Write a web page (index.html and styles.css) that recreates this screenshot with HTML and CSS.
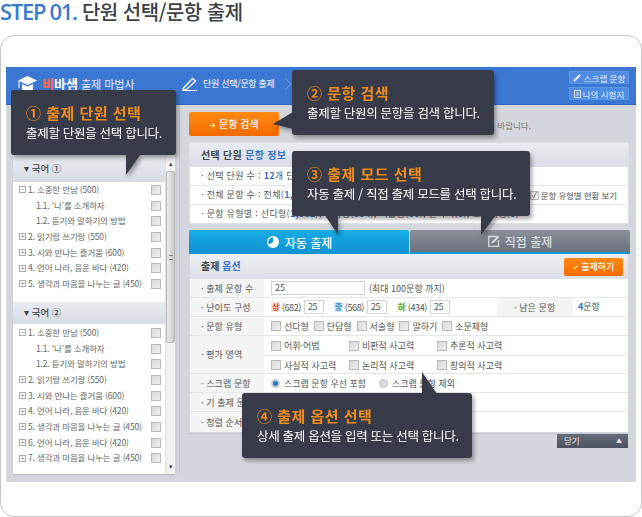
FILE: index.html
```html
<!DOCTYPE html>
<html lang="ko">
<head>
  <meta charset="UTF-8" />
  <title>STEP 01. 단원 선택/문항 출제</title>
  <link rel="stylesheet" href="styles.css">
</head>
<body>
  <h1 class="step-title"><span class="step-no">STEP 01.</span> 단원 선택/문항 출제</h1>

  <div class="card">
    <div class="app">
      <header class="app-head">
        <div class="logo">
          <svg class="cap" width="19" height="18" viewBox="0 0 19 18"><path d="M9.5 1 19 5.5 9.5 10 0 5.5z" fill="#fff"/><path d="M4 9v6c2 2 9 2 11 0V9l-5.500 2.600z" fill="#fff"/><path d="M1 6v7" stroke="#fff" fill="none"/></svg>
          <span class="logo-name"><b class="red">비</b>바샘</span>
          <span class="logo-sub">출제 마법사</span>
        </div>
        <div class="crumb">
          <svg width="16" height="14" viewBox="0 0 16 14"><path d="M1.500 11 10.500 1.500l3 2.500L4.500 12.500 1 13z" fill="none" stroke="#fff" stroke-width="1.300"/><path d="M1 13.500h14" stroke="#fff"/></svg>
          <span>단원 선택/문항 출제</span>
          <svg class="chev" width="8" height="14" viewBox="0 0 8 14"><path d="m1 1 6 6-6 6" fill="none" stroke="#6f9be0"/></svg>
        </div>
        <div class="head-btns">
          <a class="head-btn"><svg width="9" height="9" viewBox="0 0 9 9"><path d="M1 8 7 2" stroke="#dfe9fa" stroke-width="2.400" fill="none"/></svg>스크랩 문항</a>
          <a class="head-btn"><svg width="7" height="8" viewBox="0 0 7 8"><rect x=".5" y=".5" width="6" height="7" fill="none" stroke="#dfe9fa"/><path d="M2 3h3M2 5h3" stroke="#dfe9fa"/></svg>나의 시험지</a>
        </div>
      </header>

      <div class="app-body">
        <aside class="side">
          <div class="tree">
            <div class="group-head">▾ 국어 ①</div>
            <ul class="units">
              <li><span class="toggle">−</span>1. 소중한 만남 (500)<i class="cb"></i></li>
              <li class="sub">1.1. ‘나’를 소개하자<i class="cb"></i></li>
              <li class="sub">1.2. 듣기와 말하기의 방법<i class="cb"></i></li>
              <li><span class="toggle">+</span>2. 읽기랑 쓰기랑 (550)<i class="cb"></i></li>
              <li><span class="toggle">+</span>3. 시와 만나는 즐거움 (600)<i class="cb"></i></li>
              <li><span class="toggle">+</span>4. 언어 나라, 음운 바다 (420)<i class="cb"></i></li>
              <li><span class="toggle">+</span>5. 생각과 마음을 나누는 글 (450)<i class="cb"></i></li>
            </ul>
            <div class="group-head second">▾ 국어 ②</div>
            <ul class="units">
              <li><span class="toggle">−</span>1. 소중한 만남 (500)<i class="cb"></i></li>
              <li class="sub">1.1. ‘나’를 소개하자<i class="cb"></i></li>
              <li class="sub">1.2. 듣기와 말하기의 방법<i class="cb"></i></li>
              <li><span class="toggle">+</span>2. 읽기랑 쓰기랑 (550)<i class="cb"></i></li>
              <li><span class="toggle">+</span>3. 시와 만나는 즐거움 (600)<i class="cb"></i></li>
              <li><span class="toggle">+</span>4. 언어 나라, 음운 바다 (420)<i class="cb"></i></li>
              <li><span class="toggle">+</span>5. 생각과 마음을 나누는 글 (450)<i class="cb"></i></li>
              <li><span class="toggle">+</span>6. 언어 나라, 음운 바다 (420)<i class="cb"></i></li>
              <li><span class="toggle">+</span>7. 생각과 마음을 나누는 글 (450)<i class="cb"></i></li>
            </ul>
          </div>
          <div class="scroll">
            <span class="scroll-arrow">▴</span>
            <span class="scroll-thumb"><i></i></span>
            <span class="scroll-rest"></span>
            <span class="scroll-arrow">▾</span>
          </div>
        </aside>

        <main class="main">
          <div class="search-row">
            <a class="search-btn"><span class="arrow">➔</span> 문항 검색</a>
            <p class="search-note">기 바랍니다.</p>
          </div>

          <section class="info">
            <h2 class="panel-head">선택 단원 <em>문항 정보</em></h2>
            <div class="info-row">· 선택 단원 수 : <em>12</em>개 단원</div>
            <div class="info-row info-split">
              <span>· 전체 문항 수 : 전체(<em>1,680</em>)</span>
              <label class="info-check"><i class="cb checked"></i>문항 유형별 현황 보기</label>
            </div>
            <div class="info-row">· 문항 유형별 : 선다형(<em>1,002</em>), 단답형(<em>534</em>), 서술형(<em>60</em>), 말하기(<em>0</em>), 소문제형(<em>0</em>)</div>
          </section>

          <div class="tabs">
            <div class="tab tab-on">
              <svg width="14" height="14" viewBox="0 0 14 14"><circle cx="7" cy="7" r="6" fill="#fff"/><path d="M7 7V2.200A4.800 4.800 0 0 0 3 9.600z" fill="#1297d6"/></svg>
              자동 출제
            </div>
            <div class="tab tab-off">
              <svg width="12" height="12" viewBox="0 0 12 12"><path d="M9 1.500H.7v9.800h9.800V5" fill="none" stroke="#d5d8dd" stroke-width="1.300"/><path d="M3.500 8.500 4 6.500 9.800.7l1.500 1.500L5.500 8z" fill="#d5d8dd"/></svg>
              직접 출제
            </div>
          </div>

          <section class="options">
            <div class="options-head">
              <h2 class="panel-head plain">출제 <em>옵션</em></h2>
              <a class="make-btn"><span class="tick">✔</span> 출제하기</a>
            </div>

            <div class="opt-row">
              <div class="opt-label">· 출제 문항 수</div>
              <div class="opt-value"><span class="field wide">25</span><span class="gap-l">(최대 100문항 까지)</span></div>
            </div>

            <div class="opt-row">
              <div class="opt-label">· 난이도 구성</div>
              <div class="opt-value level">
                <span class="lv"><i class="lv-icon hard">상</i>(682)<span class="field">25</span></span>
                <span class="lv"><i class="lv-icon mid">중</i>(568)<span class="field">25</span></span>
                <span class="lv"><i class="lv-icon easy">하</i>(434)<span class="field">25</span></span>
              </div>
              <div class="opt-label remain">· 남은 문항</div>
              <div class="remain-val"><em>4</em>문항</div>
            </div>

            <div class="opt-row">
              <div class="opt-label">· 문항 유형</div>
              <div class="opt-value types">
                <label><i class="cb"></i>선다형</label>
                <label><i class="cb"></i>단답형</label>
                <label><i class="cb"></i>서술형</label>
                <label><i class="cb"></i>말하기</label>
                <label><i class="cb"></i>소문제형</label>
              </div>
            </div>

            <div class="opt-row tall">
              <div class="opt-label">· 평가 영역</div>
              <div class="areas">
                <div class="area-row">
                  <label><i class="cb"></i>어휘·어법</label>
                  <label><i class="cb"></i>비판적 사고력</label>
                  <label><i class="cb"></i>추론적 사고력</label>
                </div>
                <div class="area-row">
                  <label><i class="cb"></i>사실적 사고력</label>
                  <label><i class="cb"></i>논리적 사고력</label>
                  <label><i class="cb"></i>창의적 사고력</label>
                </div>
              </div>
            </div>

            <div class="opt-row">
              <div class="opt-label">· 스크랩 문항</div>
              <div class="opt-value scraps">
                <label><i class="radio on"></i>스크랩 문항 우선 포함</label>
                <label><i class="radio"></i>스크랩 문항 제외</label>
              </div>
            </div>

            <div class="opt-row">
              <div class="opt-label">· 기 출제 문항</div>
              <div class="opt-value"></div>
            </div>

            <div class="opt-row last">
              <div class="opt-label">· 정렬 순서</div>
              <div class="opt-value"></div>
            </div>
          </section>

          <div class="close-row">
            <a class="close-btn">닫기<span>▲</span></a>
          </div>
        </main>
      </div>
    </div>
  </div>

  <div class="callout c1">
    <strong>① 출제 단원 선택</strong>
    <p>출제할 단원을 선택 합니다.</p>
  </div>
  <div class="callout c2">
    <strong>② 문항 검색</strong>
    <p>출제할 단원의 문항을 검색 합니다.</p>
  </div>
  <div class="callout c3">
    <strong>③ 출제 모드 선택</strong>
    <p>자동 출제 / 직접 출제 모드를 선택 합니다.</p>
  </div>
  <div class="callout c4">
    <strong>④ 출제 옵션 선택</strong>
    <p>상세 출제 옵션을 입력 또는 선택 합니다.</p>
  </div>
</body>
</html>
```

FILE: styles.css
```css
* {
  box-sizing: border-box;
}
html, body {
  height: 517px;
  overflow: hidden;
}
body {
  margin: 0;
  background: #fff;
  font-family: "Noto Sans CJK KR", "Noto Sans", sans-serif;
  font-size: 10px;
  color: #555;
}
em {
  font-style: normal;
  color: #2f72c8;
  font-weight: bold;
}
ul {
  list-style: none;
  margin: 0;
  padding: 0;
}
p, h1, h2 {
  margin: 0;
}
i {
  font-style: normal;
}

.step-title {
  height: 35px;
  font-size: 20px;
  line-height: 22px;
  font-weight: 500;
  color: #3c404b;
  letter-spacing: -0.5px;
}
.step-no {
  font-family: "Open Sans", sans-serif;
  font-weight: 600;
  font-size: 22px;
  letter-spacing: -1.300px;
  color: #3a7ccb;
}

.card {
  width: 642px;
  height: 482px;
  border: 1px solid #c6c6c8;
  border-radius: 14px;
  padding: 31px 5px 0;
}
.app {
  width: 630px;
  height: 415px;
  background: #d3d6dc;
}

/* blue top bar */
.app-head {
  height: 38px;
  background: #3c78d3;
  border-bottom: 1px solid #3468b8;
  display: flex;
  color: #fff;
}
.logo {
  width: 176px;
  padding: 8px 0 0 12px;
  display: flex;
  align-items: flex-start;
  gap: 5px;
}
.logo-name {
  font-size: 13px;
  line-height: 18px;
  font-weight: bold;
  margin-right: -2px;
}
.red {
  color: #f4655a;
}
.logo-sub {
  font-size: 11px;
  line-height: 19px;
  color: #e8eef9;
}
.crumb {
  padding: 10px 0 0;
  display: flex;
  align-items: flex-start;
  gap: 5px;
  font-size: 9px;
  line-height: 14px;
  letter-spacing: -0.3px;
  width: 387px;
}
.chev {
  margin-left: 4px;
}
.head-btns {
  padding-top: 4px;
  display: flex;
  flex-direction: column;
  gap: 3px;
}
.head-btn {
  width: 60px;
  height: 13px;
  background: #4f8be2;
  border: 1px solid #5c96e6;
  display: flex;
  align-items: center;
  justify-content: center;
  gap: 2px;
  font-size: 8.500px;
  color: #e6eefb;
}

/* left tree + right panels */
.app-body {
  display: flex;
  height: 377px;
  padding-left: 7px;
}
.side {
  width: 162px;
  height: 319px;
  margin-top: 50px;
  display: flex;
  background: #fff;
  box-shadow: 0 1px 1px #b8bcc4;
}
.tree {
  width: 152px;
}
.group-head {
  height: 27px;
  padding-left: 11px;
  background: linear-gradient(#e9ebf0, #d8dbe3);
  font-size: 9.500px;
  line-height: 26px;
  font-weight: 500;
  color: #444;
}
.group-head.second {
  height: 22px;
  line-height: 21px;
  margin-top: 10px;
  margin-bottom: 1px;
}
.units li {
  height: 15.700px;
  line-height: 15.700px;
  padding-left: 6px;
  display: flex;
  align-items: center;
  font-size: 8.500px;
  letter-spacing: -0.15px;
  white-space: nowrap;
  color: #666;
  position: relative;
}
.units li.sub {
  padding-left: 23px;
}
.toggle {
  width: 7px;
  height: 7px;
  margin-right: 2px;
  border: 1px solid #a9adb5;
  font-size: 7px;
  line-height: 5px;
  text-align: center;
  color: #777;
  flex: none;
}
.cb {
  display: inline-block;
  flex: none;
  width: 10px;
  height: 10px;
  border: 1px solid #b9b9b9;
  background: linear-gradient(135deg, #d9d9d9, #efefef);
}
.units .cb {
  position: absolute;
  left: 138px;
  top: 3px;
}
.cb.checked {
  background: #f0f0f0;
  position: relative;
}
.cb.checked::after {
  content: "✓";
  position: absolute;
  left: 1px;
  top: -3px;
  font-size: 8px;
  line-height: 12px;
  color: #555;
}
.scroll {
  width: 10px;
  display: flex;
  flex-direction: column;
  background: #f1f1f1;
  border-left: 1px solid #e0e0e0;
}
.scroll-arrow {
  height: 16px;
  line-height: 16px;
  text-align: center;
  font-size: 7px;
  color: #444;
}
.scroll-thumb {
  height: 172px;
  background: linear-gradient(90deg, #ececec, #c9c9c9);
  border: 1px solid #b8b8b8;
  border-radius: 2px;
  display: flex;
  align-items: center;
  justify-content: center;
}
.scroll-thumb i {
  width: 4px;
  height: 5px;
  border-top: 1px solid #888;
  border-bottom: 1px solid #888;
}
.scroll-rest {
  flex: 1;
}

.main {
  width: 451px;
  height: 369px;
  margin-left: 4px;
  padding: 7px 0 0 9px;
  border-left: 1px solid #c6c9d0;
}
.search-row {
  height: 30px;
  display: flex;
  justify-content: space-between;
}
.search-btn {
  width: 90px;
  height: 24px;
  border-radius: 2px;
  background: linear-gradient(#ff8a12, #f26a00);
  color: #fff;
  font-size: 10px;
  line-height: 24px;
  font-weight: 500;
  text-align: center;
}
.arrow {
  color: #ffe68a;
  font-size: 8px;
}
.search-note {
  margin-right: 99px;
  line-height: 26px;
  font-size: 8.500px;
  color: #777;
  white-space: nowrap;
}

.info {
  height: 82px;
  width: 440px;
  background: #fff;
  border: 1px solid #dcdfe5;
  border-radius: 2px;
  overflow: hidden;
}
.panel-head {
  height: 24px;
  padding-left: 11px;
  background: linear-gradient(#e9ebf0, #dadde5);
  font-size: 10px;
  line-height: 24px;
  letter-spacing: 0.3px;
  font-weight: bold;
  color: #444;
}
.info-row {
  height: 19px;
  line-height: 18px;
  padding-left: 11px;
  font-size: 9px;
  letter-spacing: 0.3px;
  border-bottom: 1px solid #e6e7ea;
  white-space: nowrap;
}
.info-row:last-child {
  border-bottom: 0;
}
.info-split {
  display: flex;
  justify-content: space-between;
  padding-right: 11px;
}
.info-check {
  display: flex;
  align-items: center;
  gap: 2px;
  font-size: 8.500px;
  letter-spacing: -0.1px;
}
.info-check .cb {
  width: 9px;
  height: 9px;
}

.tabs {
  margin-top: 6px;
  height: 24px;
  display: flex;
  gap: 1px;
}
.tab {
  flex: 1;
  display: flex;
  align-items: center;
  justify-content: center;
  gap: 5px;
  border-radius: 2px 2px 0 0;
  font-size: 12px;
  font-weight: 500;
}
.tab-on {
  background: linear-gradient(#16ace4, #0e92d2);
  color: #fff;
}
.tab-off {
  background: linear-gradient(#8a8f99, #6c727d);
  border-bottom: 2px solid #1297d6;
  color: #d8dbe0;
}

.options {
  width: 440px;
  background: #fff;
  border: 1px solid #d4d7de;
  border-top: 0;
  box-shadow: 0 1px 1px #c5c9d2;
}
.options-head {
  height: 25px;
  display: flex;
  justify-content: space-between;
  background: linear-gradient(#eceef2, #dcdfe7);
}
.panel-head.plain {
  background: none;
  letter-spacing: 0;
}
.make-btn {
  width: 59px;
  height: 18px;
  margin: 4px 5px 0 0;
  border-radius: 2px;
  background: linear-gradient(#ff8a12, #f26a00);
  color: #fff;
  text-align: center;
  font-size: 9px;
  line-height: 18px;
  font-weight: 500;
}
.tick {
  color: #ffe68a;
  font-size: 7px;
}
.opt-row {
  height: 19px;
  display: flex;
  border-bottom: 1px solid #e6e7ea;
  font-size: 9px;
}
.opt-row.tall {
  height: 38px;
}
.opt-row.last {
  border-bottom: 0;
  height: 20px;
}
.opt-label {
  width: 74px;
  flex: none;
  padding-left: 11px;
  background: #f4f4f5;
  display: flex;
  align-items: center;
  letter-spacing: 0.1px;
  color: #555;
}
.opt-value {
  flex: 1;
  display: flex;
  align-items: center;
  padding-left: 7px;
  white-space: nowrap;
}
.opt-value label, .area-row label {
  display: flex;
  align-items: center;
  gap: 1px;
}
.opt-value .cb, .area-row .cb {
  margin-right: 2px;
}
.field {
  display: inline-block;
  width: 22px;
  height: 14px;
  line-height: 12px;
  padding-left: 3px;
  background: #fff;
  border: 1px solid #d5d5d5;
}
.field.wide {
  width: 94px;
}
.gap-l {
  margin-left: 4px;
}
.level {
  gap: 10px;
  flex: none;
  width: 233px;
}
.lv {
  display: flex;
  align-items: center;
  gap: 3px;
  width: 53px;
  letter-spacing: -0.4px;
}
.lv-icon {
  width: 10px;
  height: 10px;
  margin-right: -1px;
  border-radius: 1px;
  font-size: 8px;
  line-height: 10px;
  text-align: center;
  font-weight: bold;
}
.hard {
  background: #f9ddd4;
  color: #d9432b;
}
.mid {
  background: #d3e9f8;
  color: #2a86c8;
}
.easy {
  background: #dff0d3;
  color: #56a332;
}
.opt-label.remain {
  width: 76px;
  padding-left: 17px;
}
.remain-val {
  padding-left: 5px;
  line-height: 18px;
}
.types {
  display: grid;
  grid-template-columns: repeat(5, 42.800px);
}
.areas {
  flex: 1;
}
.area-row {
  height: 19px;
  display: grid;
  grid-template-columns: 78px 88px 88px;
  align-items: center;
  padding-left: 7px;
  white-space: nowrap;
}
.area-row + .area-row {
  border-top: 1px solid #e6e7ea;
}
.scraps label {
  width: 108px;
}
.radio {
  width: 9px;
  height: 9px;
  margin-right: 3px;
  border-radius: 50%;
  flex: none;
  background: #ddd;
  border: 1px solid #bbb;
}
.radio.on {
  background: #1c7fc4;
  border: 2px solid #c9c9c9;
}
.close-row {
  display: flex;
  justify-content: flex-end;
  padding: 1px 2px 0 0;
}
.close-btn {
  width: 71px;
  height: 14px;
  padding: 0 6px 0 7px;
  display: flex;
  justify-content: space-between;
  background: linear-gradient(#666c7a, #4e5361);
  color: #e8e8ea;
  font-size: 8.500px;
  line-height: 13px;
}
.close-btn span {
  font-size: 6px;
}

/* the dark help balloons sit over the screen */
.callout {
  position: absolute;
  height: 65px;
  padding: 11px 0 0 15px;
  background: #383c49;
  border-radius: 3px;
  filter: drop-shadow(2px 3px 2px rgba(0, 0, 0, 0.35));
  color: #fff;
  white-space: nowrap;
}
.callout strong {
  display: block;
  font-size: 15px;
  line-height: 23px;
  font-weight: bold;
  letter-spacing: 0.5px;
  color: #f08c1e;
}
.callout p {
  font-size: 12.500px;
  line-height: 18px;
  letter-spacing: -0.3px;
}
.callout::before, .callout::after {
  content: "";
  position: absolute;
  background: #383c49;
}
.c1 {
  left: 11px;
  top: 90px;
  width: 165px;
}
.c1::after {
  left: 115px;
  top: 64px;
  width: 15px;
  height: 21px;
  clip-path: polygon(0 0, 100% 0, 0 100%);
}
.c2 {
  left: 292px;
  top: 70px;
  width: 202px;
}
.c2::after {
  left: -19px;
  top: 42px;
  width: 20px;
  height: 17px;
  clip-path: polygon(100% 0, 100% 100%, 0 70%);
}
.c3 {
  left: 292px;
  top: 151px;
  width: 238px;
}
.c3::before {
  left: 33px;
  top: 64px;
  width: 13px;
  height: 20px;
  clip-path: polygon(0 0, 100% 0, 100% 100%);
}
.c3::after {
  left: 189px;
  top: 64px;
  width: 15px;
  height: 20px;
  clip-path: polygon(0 0, 100% 0, 0 100%);
}
.c4 {
  left: 242px;
  top: 393px;
  width: 230px;
}
.c4::after {
  left: 180px;
  top: -21px;
  width: 15px;
  height: 22px;
  clip-path: polygon(0 0, 100% 100%, 0 100%);
}
```
